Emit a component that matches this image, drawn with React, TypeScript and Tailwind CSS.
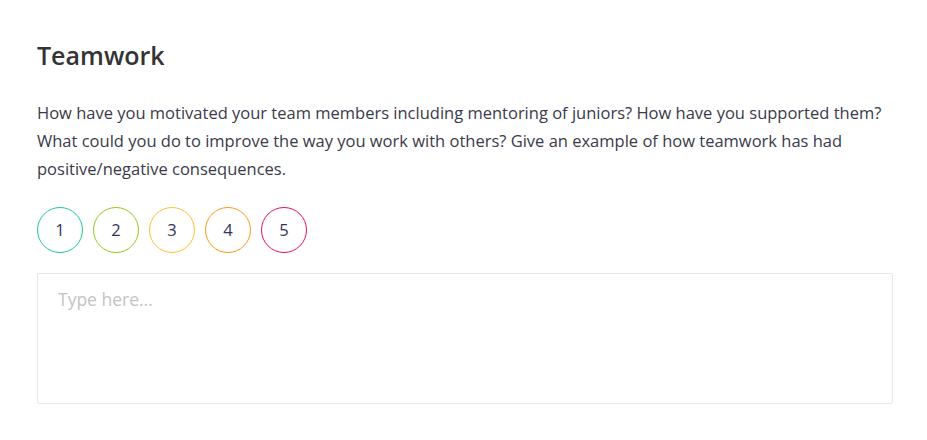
import { useState } from 'react';

const scores = [
  { n: 1, cls: 'border-[#18cc8c]' },
  { n: 2, cls: 'border-[#94c814]' },
  { n: 3, cls: 'border-[#fcc12e]' },
  { n: 4, cls: 'border-[#fc9710]' },
  { n: 5, cls: 'border-[#f0104f]' },
];

export default function App() {
  const [text, setText] = useState('');

  return (
    <div className="min-h-screen bg-white font-['Open_Sans',sans-serif] text-[#333]">
      <div className="w-[856px] ml-[37px] pt-[38px]">
        {/* Заголовок */}
        <h2 className="text-[25px] leading-[34px] font-semibold text-[#333]">Teamwork</h2>

        <p className="mt-[27px] text-[16.5px] leading-[28px] text-[#3a3a4a]">
          How have you motivated your team members including mentoring of juniors? How have you supported them? What could you do to improve the way you work with others? Give an example of how teamwork has had positive/negative consequences.
        </p>

        {/* Оценка */}
        <div className="flex gap-[10px] mt-[24px]">
          {scores.map((s) => (
            <button
              key={s.n}
              className={`w-[46px] h-[46px] rounded-full border-[1.25px] bg-white flex items-center justify-center text-[16.5px] text-[#34345a] ${s.cls}`}
            >
              {s.n}
            </button>
          ))}
        </div>

        <textarea
          value={text}
          onChange={(e) => setText(e.target.value)}
          placeholder="Type here..."
          className="mt-[20px] w-full h-[131px] border border-[#e8e8e8] rounded-[2px] px-[20px] py-[12px] text-[17.5px] leading-[26px] resize-none outline-none placeholder:text-[#c4c4c4] block"
        />
      </div>
    </div>
  );
}
